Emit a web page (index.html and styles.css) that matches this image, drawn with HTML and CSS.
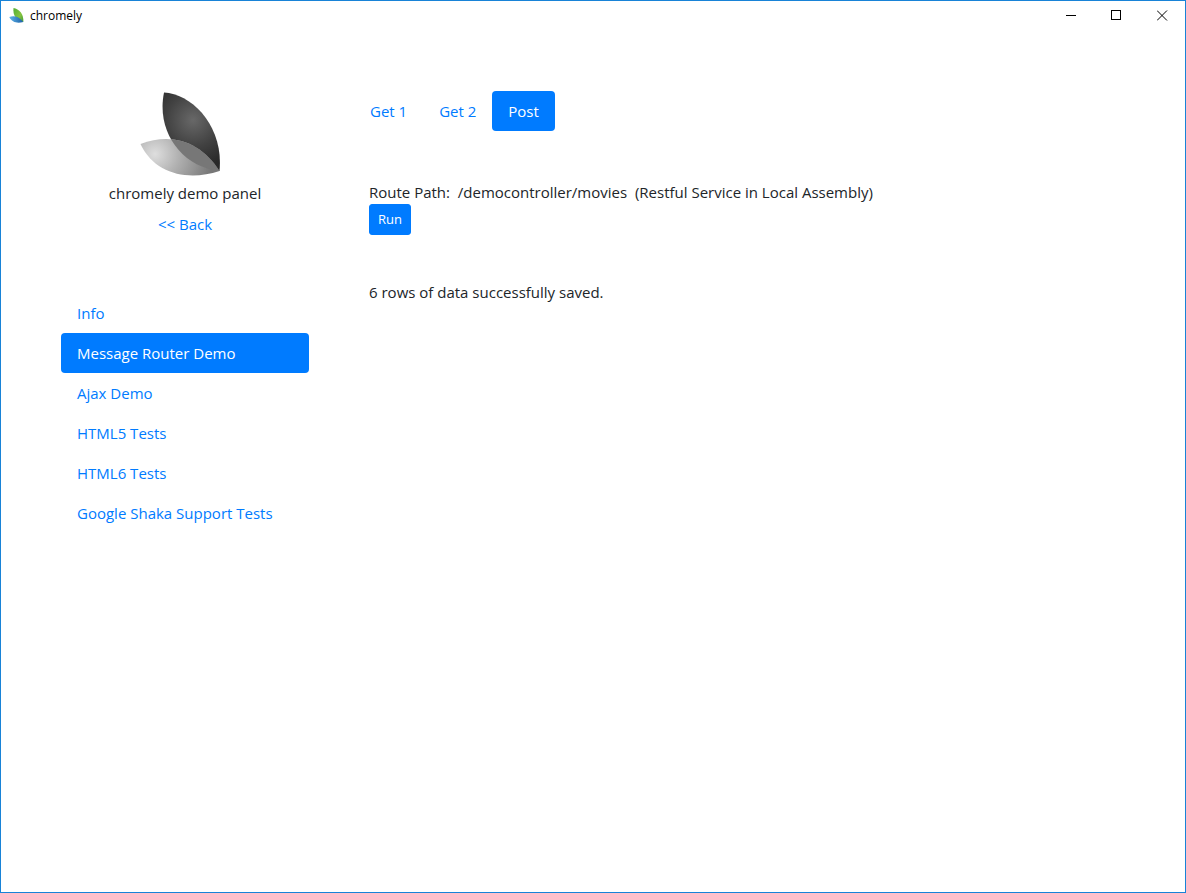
FILE: index.html
```html
<!DOCTYPE html>
<html lang="en">
<head>
<meta charset="utf-8">
<title>chromely</title>
<link rel="stylesheet" href="styles.css">
</head>
<body>
<div class="window">
  <header class="titlebar">
    <svg class="app-icon" viewBox="0 0 16 16" aria-hidden="true">
      <defs>
        <linearGradient id="green" x1="0" y1="0" x2="1" y2="1"><stop offset="0" stop-color="#4fae35"/><stop offset=".6" stop-color="#86c440"/><stop offset="1" stop-color="#3f9a3a"/></linearGradient>
        <linearGradient id="blue" x1="0" y1="0" x2="1" y2="0"><stop offset="0" stop-color="#5fb4ea"/><stop offset="1" stop-color="#1b5fa5"/></linearGradient>
      </defs>
      <path d="M4.500 0C10 .8 15 6 14.300 14C7.500 13 3.500 7 4.500 0Z" fill="url(#green)"/>
      <path d="M.3 9C5 7.300 10 8.500 14.300 14C8 15.500 3 14.500 .3 9Z" fill="url(#blue)"/>
    </svg>
    <span class="app-name">chromely</span>
    <div class="controls">
      <button class="control" type="button" aria-label="Minimize"><svg viewBox="0 0 11 11" shape-rendering="crispEdges"><path d="M1 5.500H11"/></svg></button>
      <button class="control" type="button" aria-label="Maximize"><svg viewBox="0 0 11 11" shape-rendering="crispEdges"><path d="M.5 .5H9.500V9.500H.5Z"/></svg></button>
      <button class="control" type="button" aria-label="Close"><svg viewBox="0 0 11 11"><path d="M0 .5L10 10.500M10 .5L0 10.500"/></svg></button>
    </div>
  </header>
  <div class="page">
    <aside class="sidebar">
      <svg class="logo" viewBox="0 0 82 84" role="img" aria-label="chromely logo">
        <defs>
          <radialGradient id="dark" gradientUnits="userSpaceOnUse" cx="53" cy="28" r="48"><stop offset="0" stop-color="#686868"/><stop offset=".55" stop-color="#424242"/><stop offset="1" stop-color="#292929"/></radialGradient>
          <radialGradient id="light" gradientUnits="userSpaceOnUse" cx="15" cy="62" r="58"><stop offset="0" stop-color="#dedede"/><stop offset=".4" stop-color="#b2b2b2"/><stop offset="1" stop-color="#777"/></radialGradient>
          <clipPath id="leaf"><path d="M24 .5C52 2 84 34 79.500 79C42 75 16 40 24 .5Z"/></clipPath>
        </defs>
        <path d="M24 .5C52 2 84 34 79.500 79C42 75 16 40 24 .5Z" fill="url(#dark)"/>
        <path d="M.5 52C32 40 61 50 79.500 79C49 89 15 83 .5 52Z" fill="url(#light)"/>
        <path d="M.5 52C32 40 61 50 79.500 79C49 89 15 83 .5 52Z" fill="#777" clip-path="url(#leaf)"/>
      </svg>
      <p class="caption">chromely demo panel</p>
      <a class="back" href="#">&lt;&lt; Back</a>
      <nav class="menu">
        <a class="pill" href="#">Info</a>
        <a class="pill active" href="#" aria-current="page">Message Router Demo</a>
        <a class="pill" href="#">Ajax Demo</a>
        <a class="pill" href="#">HTML5 Tests</a>
        <a class="pill" href="#">HTML6 Tests</a>
        <a class="pill" href="#">Google Shaka Support Tests</a>
      </nav>
    </aside>
    <main class="content">
      <nav class="tabs">
        <a class="pill" href="#">Get 1</a>
        <a class="pill" href="#">Get 2</a>
        <a class="pill active" href="#" aria-current="page">Post</a>
      </nav>
      <section class="panel">
        <p>Route Path:&nbsp; /democontroller/movies&nbsp; (Restful Service in Local Assembly)</p>
        <button class="run" type="button">Run</button>
        <p class="result">6 rows of data successfully saved.</p>
      </section>
    </main>
  </div>
</div>
</body>
</html>
```
FILE: styles.css
```css
* { box-sizing: border-box; }
body {
  margin: 0;
  background: #fff;
  color: #212529;
  font: 400 15px/24px "Open Sans", "Noto Sans", sans-serif;
}
p { margin: 0; }
a { color: #007bff; text-decoration: none; }
.window { min-height: 100vh; border: 1px solid #1883d7; }
.titlebar { display: flex; align-items: center; height: 30px; padding-left: 8px; }
.app-icon { width: 16px; height: 16px; }
.app-name { margin-left: 5px; color: #000; font-size: 12px; }
.controls { display: flex; align-self: flex-start; margin-left: auto; }
.control {
  display: flex;
  align-items: center;
  justify-content: center;
  width: 46px;
  height: 28px;
  padding: 0;
  border: 0;
  background: none;
}
.control svg { width: 11px; height: 11px; fill: none; stroke: #000; }
.page { display: flex; gap: 45px; padding: 60px; }
.sidebar { display: flex; flex: 0 0 248px; flex-direction: column; align-items: center; }
.logo { width: 82px; height: 84px; margin: 1px 8px 5px 0; }
.caption { margin-bottom: 7px; }
.menu { display: flex; flex-direction: column; width: 100%; margin-top: 57px; }
.pill { padding: 8px 16px; border-radius: 4px; }
.pill.active { background: #007bff; color: #fff; }
.content { flex: 1; min-width: 0; }
.tabs { display: flex; }
.panel { padding: 49px 15px 0; }
.run {
  display: block;
  padding: 4px 8px;
  border: 1px solid #007bff;
  border-radius: 3px;
  background: #007bff;
  color: #fff;
  font: 400 13px/21px "Open Sans", "Noto Sans", sans-serif;
}
.result { margin-top: 45px; }
```
